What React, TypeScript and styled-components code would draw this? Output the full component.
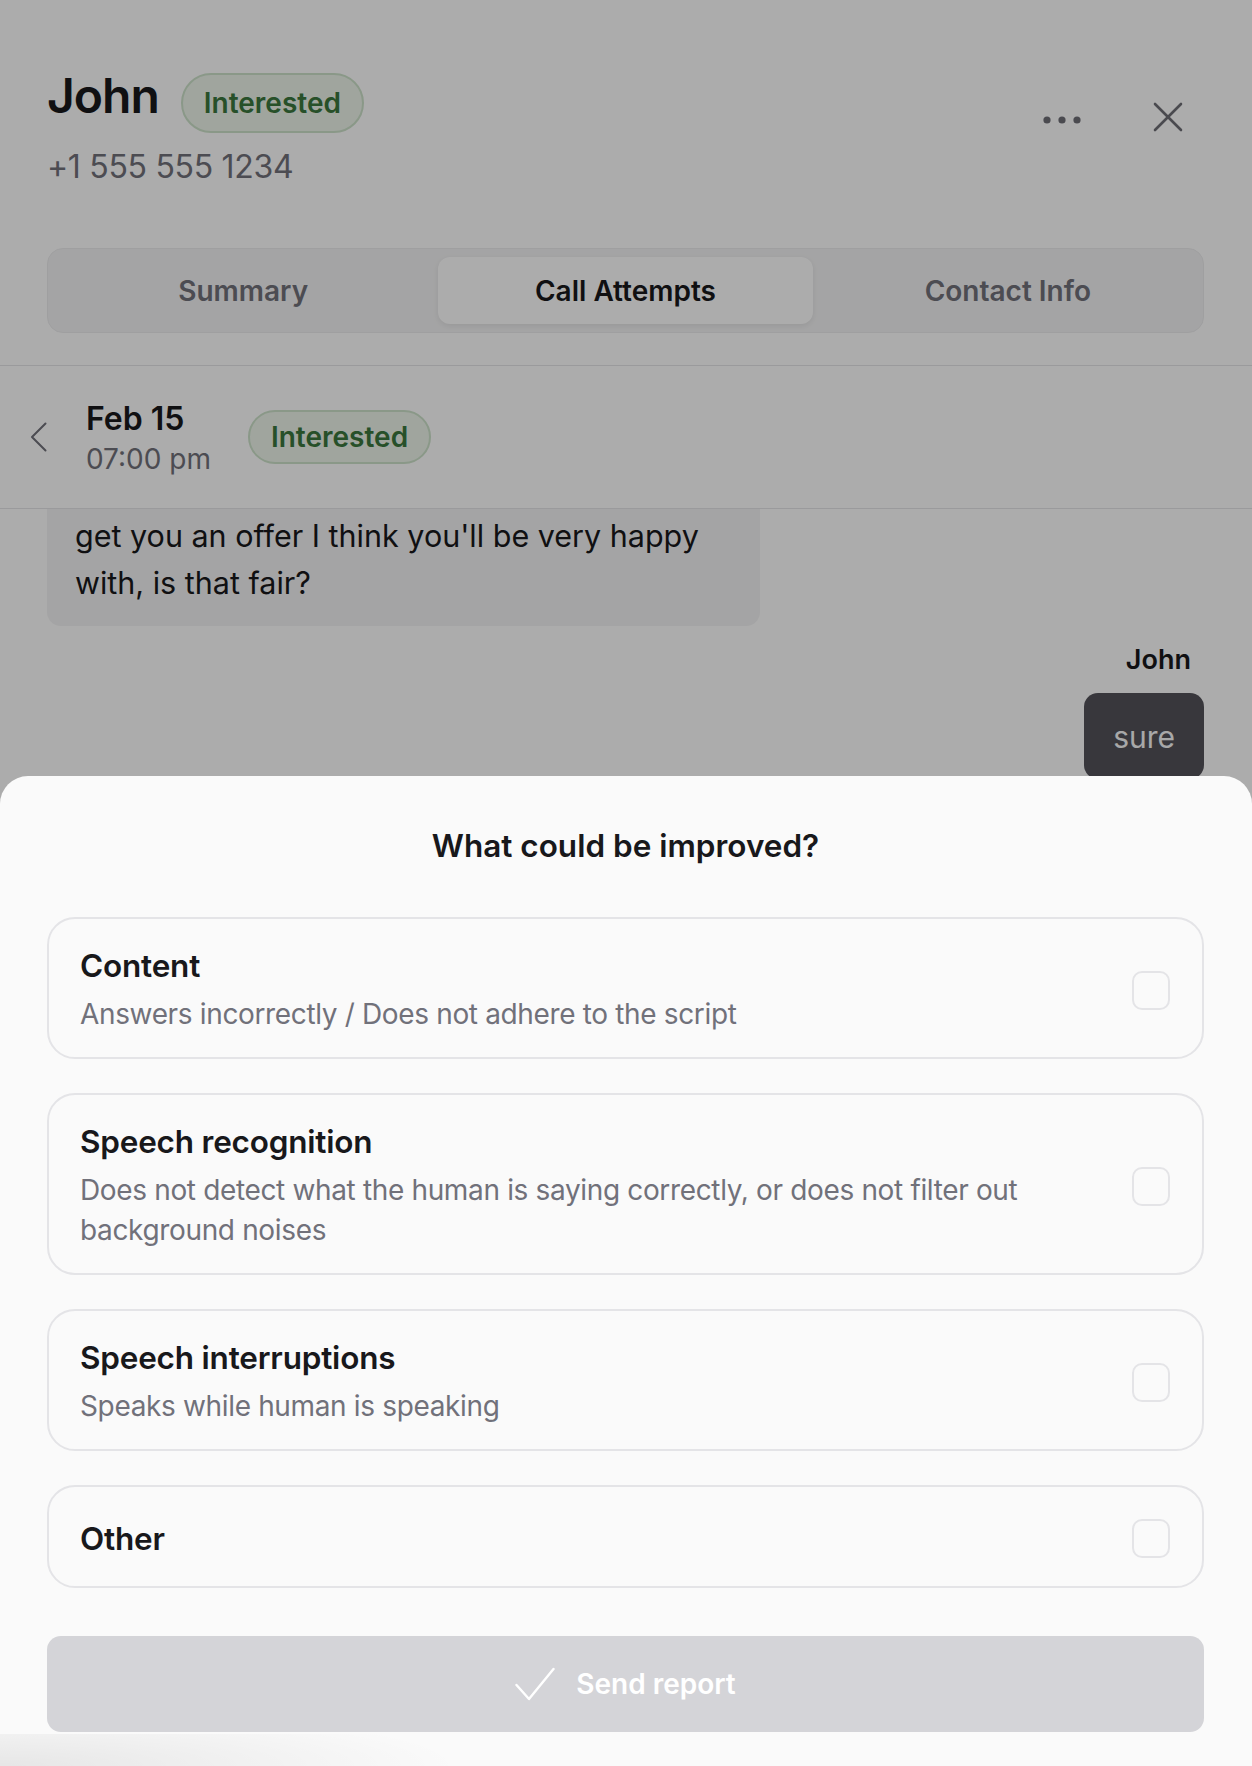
import React, { useState } from 'react'
import styled, { createGlobalStyle } from 'styled-components'

const GlobalStyle = createGlobalStyle`
  html, body {
    margin: 0;
    padding: 0;
    background: #ffffff;
  }
  body {
    font-family: Inter, "Noto Sans", sans-serif;
    color: #18181b;
    overflow: hidden;
  }
  * {
    box-sizing: border-box;
  }
`

const Page = styled.div`
  position: relative;
  height: 1766px;
  overflow: hidden;
  background: #ffffff;
`

const HeaderSection = styled.section`
  padding: 67px 48px 32px 47px;
  border-bottom: 1px solid #e4e4e7;
`

const TopRow = styled.div`
  display: flex;
  justify-content: space-between;
  align-items: flex-start;
`

const Identity = styled.div`
  display: flex;
  flex-direction: column;
`

const NameRow = styled.div`
  display: flex;
  align-items: baseline;
  gap: 22px;
`

const Name = styled.h1`
  margin: 0;
  font-size: 48px;
  line-height: 1.2;
  font-weight: 600;
  letter-spacing: -1px;
`

const Badge = styled.span<{ $tall?: boolean }>`
  display: inline-flex;
  align-items: center;
  padding: ${(p) => (p.$tall ? '11px 21px' : '8px 21px')};
  font-size: 28px;
  line-height: 34px;
  font-weight: 600;
  color: #3a773d;
  background: #edf5eb;
  border: 2px solid #cde2ca;
  border-radius: 999px;
`

const Phone = styled.div`
  margin-top: 14px;
  font-size: 32px;
  line-height: 40px;
  letter-spacing: -0.3px;
  color: #71717a;
`

const Actions = styled.div`
  display: flex;
  align-items: center;
  gap: 62px;
  margin-top: 28px;
  margin-right: 14px;
`

const IconButton = styled.button`
  display: flex;
  align-items: center;
  justify-content: center;
  width: 44px;
  height: 44px;
  padding: 0;
  border: none;
  background: transparent;
  color: #6e6e76;
  cursor: pointer;
`

const Tabs = styled.div`
  display: grid;
  grid-template-columns: repeat(3, 1fr);
  gap: 8px;
  margin-top: 61px;
  padding: 8px;
  background: #f4f4f5;
  border: 1px solid #ececee;
  border-radius: 16px;
`

const Tab = styled.button<{ $active?: boolean }>`
  height: 67px;
  border: none;
  border-radius: 12px;
  font-family: inherit;
  font-size: 28px;
  font-weight: 600;
  color: ${(p) => (p.$active ? '#18181b' : '#71717a')};
  background: ${(p) => (p.$active ? '#ffffff' : 'transparent')};
  box-shadow: ${(p) => (p.$active ? '0 2px 6px rgba(0, 0, 0, 0.08)' : 'none')};
  cursor: pointer;
`

const CallRow = styled.div`
  display: flex;
  align-items: center;
  height: 143px;
  padding-left: 30px;
  border-bottom: 1px solid #e4e4e7;
`

const BackButton = styled.button`
  display: flex;
  padding: 0;
  border: none;
  background: transparent;
  color: #71717a;
  cursor: pointer;
`

const CallWhen = styled.div`
  display: flex;
  flex-direction: column;
  gap: 5px;
  margin: 2px 37px 0 38px;
`

const CallDate = styled.div`
  font-size: 32px;
  line-height: 36px;
  font-weight: 600;
`

const CallTime = styled.div`
  font-size: 28px;
  line-height: 34px;
  color: #71717a;
`

const Messages = styled.div`
  display: flex;
  flex-direction: column;
  padding: 0 48px 0 47px;
`

const AgentBubble = styled.div`
  align-self: flex-start;
  max-width: 713px;
  padding: 3px 28px 20px;
  font-size: 30.5px;
  line-height: 47px;
  background: #f4f4f5;
  border-radius: 0 0 14px 14px;
`

const Speaker = styled.div`
  align-self: flex-end;
  margin: 17px 13px 0 0;
  font-size: 27px;
  line-height: 34px;
  font-weight: 600;
`

const UserBubble = styled.div`
  align-self: flex-end;
  margin-top: 16px;
  padding: 24px 29px 22px;
  font-size: 30px;
  line-height: 40px;
  color: #fafafa;
  background: #53525a;
  border-radius: 14px;
`

const Overlay = styled.div`
  position: absolute;
  inset: 0;
  background: rgba(0, 0, 0, 0.325);
`

const Sheet = styled.div`
  position: absolute;
  top: 776px;
  left: 0;
  right: 0;
  bottom: 0;
  display: flex;
  flex-direction: column;
  padding: 50px 48px 0 47px;
  background: #fafafa;
  border-radius: 28px 28px 0 0;
  overflow: hidden;

  &::after {
    content: '';
    position: absolute;
    left: 0;
    right: 0;
    bottom: 0;
    height: 32px;
    background: radial-gradient(ellipse 460px 60px at 0 100%, rgba(0, 0, 0, 0.08), rgba(0, 0, 0, 0));
    pointer-events: none;
  }
`

const SheetTitle = styled.h2`
  margin: 0 0 51px;
  text-align: center;
  font-size: 31.5px;
  line-height: 40px;
  font-weight: 600;
`

const OptionList = styled.div`
  display: flex;
  flex-direction: column;
  gap: 34px;
`

const OptionCard = styled.label`
  display: flex;
  align-items: center;
  gap: 40px;
  min-height: 103px;
  padding: 27px 32px 23px 31px;
  border: 2px solid #e4e4e7;
  border-radius: 28px;
  cursor: pointer;
`

const OptionText = styled.div`
  flex: 1;
  display: flex;
  flex-direction: column;
  gap: 8px;
`

const OptionTitle = styled.div`
  font-size: 31.5px;
  line-height: 40px;
  font-weight: 600;
  letter-spacing: -0.2px;
`

const OptionHint = styled.div`
  font-size: 28px;
  line-height: 40px;
  letter-spacing: -0.35px;
  color: #71717a;
`

const Checkbox = styled.span<{ $checked?: boolean }>`
  flex-shrink: 0;
  width: 38px;
  height: 39px;
  border: 2px solid ${(p) => (p.$checked ? '#18181b' : '#e4e4e7')};
  background: ${(p) => (p.$checked ? '#18181b' : 'transparent')};
  border-radius: 10px;
`

const SendButton = styled.button`
  display: flex;
  align-items: center;
  justify-content: center;
  gap: 21px;
  height: 96px;
  margin-top: 48px;
  padding-left: 6px;
  border: none;
  border-radius: 14px;
  font-family: inherit;
  font-size: 28px;
  font-weight: 600;
  color: #ffffff;
  background: #d4d4d8;
  cursor: pointer;
`

const options = [
  { title: 'Content', hint: 'Answers incorrectly / Does not adhere to the script' },
  {
    title: 'Speech recognition',
    hint: 'Does not detect what the human is saying correctly, or does not filter out background noises',
  },
  { title: 'Speech interruptions', hint: 'Speaks while human is speaking' },
  { title: 'Other', hint: '' },
]

const App = (): JSX.Element => {
  const [checked, setChecked] = useState<string[]>([])

  const toggle = (title: string): void => {
    setChecked(checked.includes(title) ? checked.filter((t) => t !== title) : [...checked, title])
  }

  return (
    <Page>
      <GlobalStyle />
      <HeaderSection>
        <TopRow>
          <Identity>
            <NameRow>
              <Name>John</Name>
              <Badge $tall>Interested</Badge>
            </NameRow>
            <Phone>+1 555 555 1234</Phone>
          </Identity>
          <Actions>
            <IconButton aria-label="More">
              <svg width="38" height="44" viewBox="0 0 38 44">
                <circle cx="4" cy="25" r="3.6" fill="currentColor" />
                <circle cx="19" cy="25" r="3.6" fill="currentColor" />
                <circle cx="34" cy="25" r="3.6" fill="currentColor" />
              </svg>
            </IconButton>
            <IconButton aria-label="Close">
              <svg width="30" height="30" viewBox="0 0 30 30" fill="none" stroke="currentColor" strokeWidth="2.6" strokeLinecap="round">
                <line x1="2" y1="2" x2="28" y2="28" />
                <line x1="28" y1="2" x2="2" y2="28" />
              </svg>
            </IconButton>
          </Actions>
        </TopRow>
        <Tabs>
          <Tab>Summary</Tab>
          <Tab $active>Call Attempts</Tab>
          <Tab>Contact Info</Tab>
        </Tabs>
      </HeaderSection>

      <CallRow>
        <BackButton aria-label="Back">
          <svg width="18" height="30" viewBox="0 0 18 30" fill="none" stroke="currentColor" strokeWidth="2" strokeLinecap="round" strokeLinejoin="round">
            <polyline points="15.5,1.5 2,15 15.5,28.5" />
          </svg>
        </BackButton>
        <CallWhen>
          <CallDate>Feb 15</CallDate>
          <CallTime>07:00 pm</CallTime>
        </CallWhen>
        <Badge>Interested</Badge>
      </CallRow>

      <Messages>
        <AgentBubble>get you an offer I think you'll be very happy with, is that fair?</AgentBubble>
        <Speaker>John</Speaker>
        <UserBubble>sure</UserBubble>
      </Messages>

      <Overlay />

      <Sheet>
        <SheetTitle>What could be improved?</SheetTitle>
        <OptionList>
          {options.map((o) => (
            <OptionCard key={o.title} onClick={() => { toggle(o.title) }}>
              <OptionText>
                <OptionTitle>{o.title}</OptionTitle>
                {o.hint !== '' && <OptionHint>{o.hint}</OptionHint>}
              </OptionText>
              <Checkbox $checked={checked.includes(o.title)} />
            </OptionCard>
          ))}
        </OptionList>
        <SendButton>
          <svg width="40" height="34" viewBox="0 0 40 34" fill="none" stroke="currentColor" strokeWidth="2.4" strokeLinecap="round" strokeLinejoin="round">
            <polyline points="1.5,18 14,32 38.5,2" />
          </svg>
          Send report
        </SendButton>
      </Sheet>
    </Page>
  )
}

export default App
